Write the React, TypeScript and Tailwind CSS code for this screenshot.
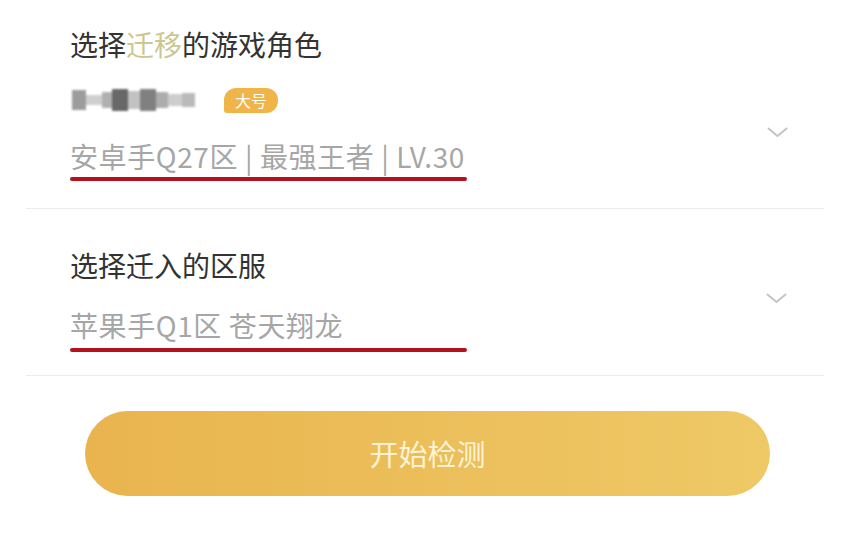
import React from 'react';

function Chevron({ className }: { className?: string }) {
  return (
    <svg width="21" height="11" viewBox="0 0 21 11" className={className}>
      <polyline
        points="1.5,1.5 10.5,9 19.5,1.5"
        fill="none"
        stroke="#c4c4c4"
        strokeWidth="2"
        strokeLinecap="round"
        strokeLinejoin="round"
      />
    </svg>
  );
}

// blurred nickname placeholder
const blurBlocks = [
  { w: 14, h: 20, c: '#9c9c9c' },
  { w: 16, h: 10, c: '#cfcfcf' },
  { w: 10, h: 16, c: '#b0b0b0' },
  { w: 16, h: 22, c: '#686868' },
  { w: 12, h: 18, c: '#c2c2c2' },
  { w: 16, h: 22, c: '#808080' },
  { w: 12, h: 16, c: '#adadad' },
  { w: 14, h: 12, c: '#cdcdcd' },
  { w: 13, h: 14, c: '#bababa' },
];

export default function App() {
  return (
    <div className="w-[850px] h-[552px] bg-white font-['Noto_Sans_CJK_SC','Noto_Sans',sans-serif] overflow-hidden">
      <div className="mx-[26px]">
        {/* migrate role */}
        <section className="flex border-b border-[#ececec] pt-[24px] pb-[27px] pl-[44px] pr-[36px]">
          <div className="flex-1">
            <h2 className="text-[28px] leading-[40px] text-[#333333]">
              选择<span className="text-[#cbc78f]">迁移</span>的游戏角色
            </h2>
            <div className="mt-[23px] h-[26px] flex items-center">
              <div className="flex items-center h-[22px] ml-[2px] w-[123px] blur-[1px]">
                {blurBlocks.map((b, i) => (
                  <div
                    key={i}
                    style={{ width: b.w, height: b.h, backgroundColor: b.c }}
                  />
                ))}
              </div>
              <span className="ml-[29px] h-[25px] px-[11px] flex items-center rounded-[12px] rounded-bl-[3px] bg-[#f0b548] text-white text-[16px] leading-none">
                大号
              </span>
            </div>
            <div className="mt-[25px] text-[28px] leading-[36px] tracking-[0.6px] text-[#a6a6a6] whitespace-nowrap">
              安卓手Q27区 | 最强王者 | LV.30
            </div>
            <div className="mt-[3px] h-[4px] w-[397px] rounded-full bg-[#b3121c]" />
          </div>
          <Chevron className="mt-[103px] shrink-0" />
        </section>

        {/* target server */}
        <section className="flex border-b border-[#ececec] pt-[36px] pb-[23px] pl-[44px] pr-[37px]">
          <div className="flex-1">
            <h2 className="text-[28px] leading-[40px] text-[#333333]">选择迁入的区服</h2>
            <div className="mt-[22px] text-[28px] leading-[36px] tracking-[0.6px] text-[#a6a6a6] whitespace-nowrap">
              苹果手Q1区 苍天翔龙
            </div>
            <div className="mt-[5px] h-[4px] w-[397px] rounded-full bg-[#b3121c]" />
          </div>
          <Chevron className="mt-[48px] shrink-0" />
        </section>

        <button className="mt-[35px] ml-[59px] w-[685px] h-[85px] rounded-full bg-gradient-to-r from-[#e9b44e] to-[#eec966] text-[29px] text-[#fff3d6]">
          开始检测
        </button>
      </div>
    </div>
  );
}
